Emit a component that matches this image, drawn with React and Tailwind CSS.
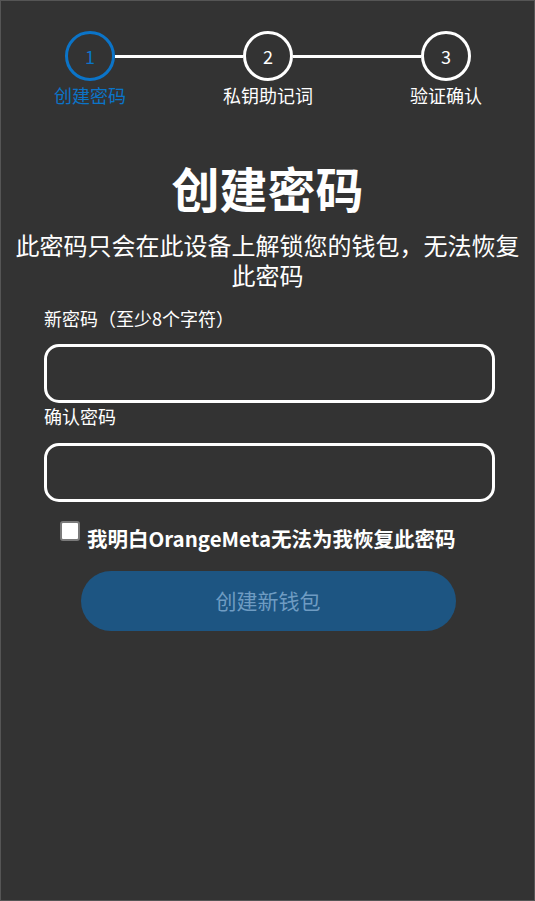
import { useState } from 'react';

// 创建钱包第一步：设置密码
const steps = ['创建密码', '私钥助记词', '验证确认'];

function Stepper({ current = 0 }) {
  return (
    <div className="flex items-start pl-[64px] pt-[30px]">
      {steps.map((label, i) => {
        const active = i === current;
        return (
          <div key={label} className="flex items-start">
            {i > 0 && <div className="w-[128px] h-[3px] bg-white mt-[24px]" />}
            <div className="w-[50px] flex flex-col items-center">
              <div
                className={`w-[50px] h-[50px] rounded-full border-[3px] flex items-center justify-center text-[18px] ${
                  active ? 'border-[#0b74c8] text-[#0b74c8]' : 'border-white text-white'
                }`}
              >
                {i + 1}
              </div>
              <span
                className={`whitespace-nowrap text-[18px] leading-[24px] mt-[2px] ${
                  active ? 'text-[#0b74c8]' : 'text-white'
                }`}
              >
                {label}
              </span>
            </div>
          </div>
        );
      })}
    </div>
  );
}

export default function App() {
  const [pwd, setPwd] = useState('');
  const [confirm, setConfirm] = useState('');
  const [agreed, setAgreed] = useState(false);
  const ready = agreed && pwd.length >= 8 && pwd === confirm;

  return (
    <div
      className="min-h-screen h-[901px] bg-[#333333] border border-[#555555] text-white"
      style={{ fontFamily: '"Noto Sans CJK SC", "Noto Sans", sans-serif' }}
    >
      <Stepper current={0} />

      <h1 className="text-center font-bold text-[48px] leading-[56px] mt-[52px]">创建密码</h1>
      <p className="text-center text-[24px] leading-[30px] px-[10px] mt-[15px]">
        此密码只会在此设备上解锁您的钱包，无法恢复
        <br />
        此密码
      </p>

      <div className="mx-[43px] w-[451px] mt-[15px]">
        <label className="block text-[18px] leading-[26px]">新密码（至少8个字符）</label>
        <input
          type="password"
          value={pwd}
          onChange={(e) => setPwd(e.target.value)}
          className="block w-full h-[59px] mt-[13px] rounded-[15px] border-[3px] border-white bg-transparent px-4 text-white outline-none"
        />
        <label className="block text-[18px] leading-[26px]">确认密码</label>
        <input
          type="password"
          value={confirm}
          onChange={(e) => setConfirm(e.target.value)}
          className="block w-full h-[59px] mt-[14px] rounded-[15px] border-[3px] border-white bg-transparent px-4 text-white outline-none"
        />
      </div>

      <label className="flex items-start gap-[7px] ml-[59px] mt-[21px]">
        <input
          type="checkbox"
          checked={agreed}
          onChange={(e) => setAgreed(e.target.checked)}
          className="appearance-none shrink-0 w-[20px] h-[20px] m-0 -mt-[2px] bg-white border-2 border-[#7a7a7a] rounded-[3px] checked:bg-[#0b74c8]"
        />
        <span className="font-bold text-[20.5px] leading-[30px]">我明白OrangeMeta无法为我恢复此密码</span>
      </label>

      <div className="flex justify-center mt-[18px] pl-[1px]">
        <button
          type="button"
          disabled={!ready}
          className="w-[375px] h-[60px] rounded-full bg-[#1d5582] text-[#6f9cc2] text-[21px]"
        >
          创建新钱包
        </button>
      </div>
    </div>
  );
}
